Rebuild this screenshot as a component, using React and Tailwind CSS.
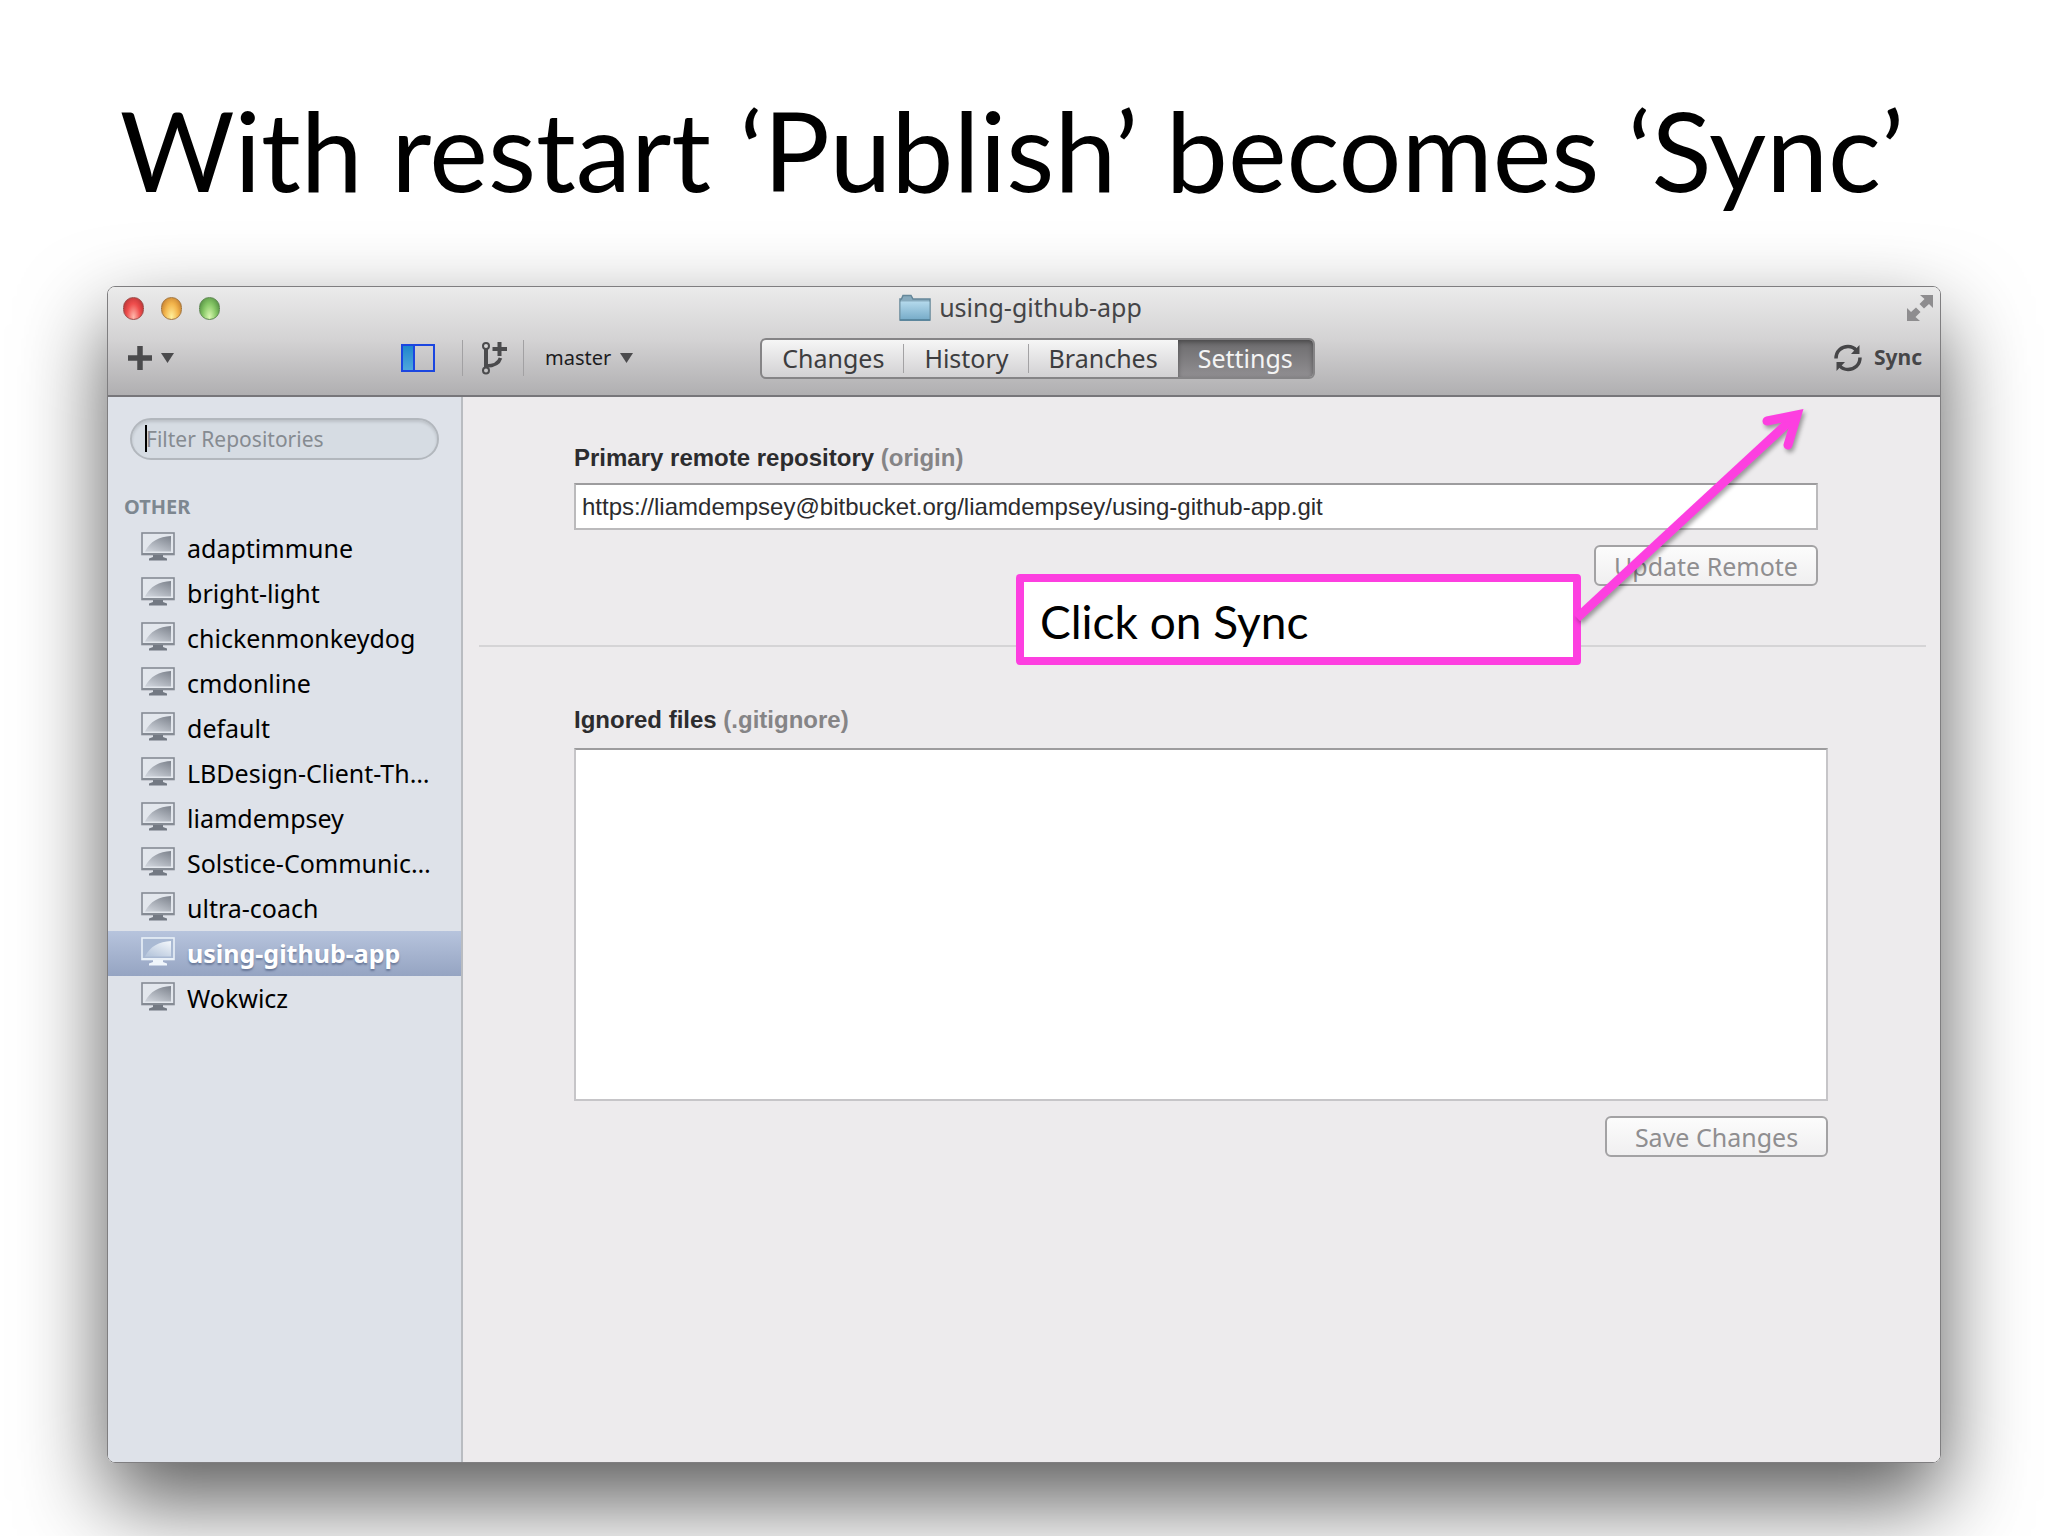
import { useState } from 'react'
import clsx from 'clsx'

const TABS = ['Changes', 'History', 'Branches', 'Settings']

const REPOS = [
  'adaptimmune',
  'bright-light',
  'chickenmonkeydog',
  'cmdonline',
  'default',
  'LBDesign-Client-Th…',
  'liamdempsey',
  'Solstice-Communic…',
  'ultra-coach',
  'using-github-app',
  'Wokwicz',
]

function Triangle() {
  return (
    <svg width="13" height="10" viewBox="0 0 13 10" fill="#4b4b4d" aria-hidden="true">
      <path d="M0 0h13L6.5 10z" />
    </svg>
  )
}

function MonitorIcon({ active }) {
  const id = active ? 'screen-on' : 'screen-off'
  const frame = active ? '#e9f0f8' : '#858b94'
  return (
    <svg width="34" height="29" viewBox="0 0 34 29" className="mb-1 shrink-0" aria-hidden="true">
      <defs>
        <linearGradient id={id} x1="1" y1="0" x2="0.3" y2="1">
          <stop offset="0" stopColor={active ? '#f4f8fc' : '#7c828c'} />
          <stop offset="1" stopColor={active ? '#b9c8dd' : '#c9ced6'} />
        </linearGradient>
      </defs>
      <rect x="1" y="1" width="32" height="21.5" fill={active ? '#a9b9d3' : '#e3e7ed'} stroke={frame} strokeWidth="1.6" />
      <path d="M4 19.500C9 9.500 18 4.500 30 4v15.500z" fill={`url(#${id})`} />
      <path d="M1 21h32v2H1z" fill={frame} />
      <path d="M12 23h10v2l4 1.500V28.500H8V26.500l4-1.500z" fill={active ? '#f0f6fc' : '#737983'} />
    </svg>
  )
}

function BranchIcon() {
  return (
    <svg width="27" height="34" viewBox="0 0 27 34" fill="none" stroke="#4b4b4d" aria-hidden="true">
      <path d="M5 8v19" strokeWidth="4" />
      <path d="M5 25c9 0 13-3 14.500-8" strokeWidth="3.600" />
      <path d="M18.500 1v14M11.500 8H26" strokeWidth="4" />
      <circle cx="5" cy="5" r="3" fill="#d5d4d5" strokeWidth="2" />
      <circle cx="5" cy="29.500" r="3" fill="#c4c3c4" strokeWidth="2" />
    </svg>
  )
}

function SyncIcon() {
  return (
    <svg width="28" height="28" viewBox="0 0 28 28" fill="none" stroke="#464648" strokeWidth="3.500" aria-hidden="true">
      <path d="M2 14.500C2 7 7.500 2.500 14 2.500c3.500 0 6.500 1.500 8.500 4" />
      <path d="M26 13.500C26 21 20.500 25.500 14 25.500c-3.500 0-6.500-1.500-8.500-4" />
      <path d="M25.500 1v9h-8.500z" fill="#464648" stroke="none" />
      <path d="M2.500 27v-9h8.500z" fill="#464648" stroke="none" />
    </svg>
  )
}

function FolderIcon() {
  return (
    <svg width="32" height="28" viewBox="0 0 32 28" aria-hidden="true">
      <defs>
        <linearGradient id="folder" x1="0" y1="0" x2="0" y2="1">
          <stop offset="0" stopColor="#b4d9ec" />
          <stop offset="1" stopColor="#77acc9" />
        </linearGradient>
      </defs>
      <path d="M1 26V5h1.500L4 1.500h8L14 5h17v21z" fill="#87aabd" stroke="#658799" strokeWidth="1.500" />
      <path d="M1.500 7.500h29v18h-29z" fill="url(#folder)" />
      <path d="M1 26h30" stroke="#4f7f99" strokeWidth="1.500" />
    </svg>
  )
}

function ExpandIcon() {
  return (
    <svg width="28" height="28" viewBox="0 0 28 28" fill="#8e8d8f" aria-hidden="true">
      <path d="M14 1h13v13l-4-4-5 4.500-4.500-4.500L18.500 5z" />
      <path d="M14 27H1V14l4 4 5-4.500L14.500 18 9.500 23z" />
    </svg>
  )
}

function TitleBar() {
  const light = 'h-[23px] w-[21px] rounded-full border'
  return (
    <div className="grid h-[42px] grid-cols-[1fr_auto_1fr] items-center pr-[6px] pl-[15px]">
      <div className="flex gap-[17px]">
        <button aria-label="Close" className={clsx(light, 'border-[#9c4a47] bg-radial-[at_50%_90%] from-[#ffb9ac] via-[#ef4d4c] to-[#a52a2d]')} />
        <button aria-label="Minimize" className={clsx(light, 'border-[#a3763e] bg-radial-[at_50%_90%] from-[#fff09c] via-[#f3b54c] to-[#b56c25]')} />
        <button aria-label="Zoom" className={clsx(light, 'border-[#5d8850] bg-radial-[at_50%_90%] from-[#d9f8b0] via-[#86c766] to-[#437c37]')} />
      </div>
      <div className="mr-4 flex items-center gap-2 text-[25px] text-[#454547]">
        <FolderIcon />
        using-github-app
      </div>
      <button aria-label="Full screen" className="justify-self-end">
        <ExpandIcon />
      </button>
    </div>
  )
}

function Toolbar({ tab, setTab }) {
  return (
    <div className="grid h-[58px] grid-cols-[1fr_auto_1fr] items-center pr-[18px] pl-[19px]">
      <div className="flex items-center">
        <div className="w-[274px]">
          <button aria-label="Add repository" className="flex items-center gap-2">
            <svg width="26" height="26" viewBox="0 0 26 26" aria-hidden="true">
              <path d="M13 1v24M1 13h24" stroke="#4b4b4d" strokeWidth="5.500" />
            </svg>
            <Triangle />
          </button>
        </div>
        <button aria-label="Toggle sidebar" className="flex h-7 w-[34px] border-2 border-[#1b46e0]">
          <span className="h-full w-[12px] border-r-2 border-[#1b46e0] bg-linear-to-b from-[#1c87cc] to-[#4da6dd]" />
        </button>
        <span className="mr-[18px] ml-[27px] h-9 w-px bg-[#a2a1a3]" />
        <button aria-label="New branch">
          <BranchIcon />
        </button>
        <span className="mr-[21px] ml-[15px] h-9 w-px bg-[#a2a1a3]" />
        <label className="flex items-center gap-2">
          <select aria-label="Branch" className="appearance-none text-xl text-[#1c1c1e]">
            <option>master</option>
          </select>
          <Triangle />
        </label>
      </div>

      <div className="ml-[26px] flex h-[41px] overflow-hidden rounded-md border-2 border-[#858486] bg-linear-to-b from-[#f6f6f6] to-[#d2d1d3] text-[25px] text-[#3d3d3f]">
        {TABS.map((name, i) => (
          <button
            key={name}
            onClick={() => setTab(name)}
            className={clsx(
              'relative px-5',
              tab === name && 'bg-linear-to-b from-[#6c6b6d] to-[#918f92] text-[#f4f4f4] shadow-[inset_0_2px_5px_rgba(0,0,0,0.35)]'
            )}
          >
            {name}
            {i < 2 && <span className="absolute top-1 right-0 h-[29px] w-px bg-[#a3a2a4]" />}
          </button>
        ))}
      </div>

      <button className="flex items-center gap-3 justify-self-end text-[21px] font-bold text-[#464648]">
        <SyncIcon />
        Sync
      </button>
    </div>
  )
}

function Sidebar({ repo, setRepo }) {
  return (
    <aside className="w-[355px] shrink-0 border-r-2 border-[#b9bcc1] bg-[#dee2e9] pt-[21px]">
      <div className="relative mx-[22px]">
        <input
          type="text"
          aria-label="Filter Repositories"
          placeholder="Filter Repositories"
          className="h-[42px] w-[309px] rounded-full border-2 border-[#b2b7bd] bg-[#d6dce3] px-[14px] text-[21px] text-black shadow-[inset_0_2px_3px_rgba(0,0,0,0.12)] outline-none placeholder:text-[#868b91]"
        />
        <span className="absolute top-[7px] left-[15px] h-[27px] w-[2px] bg-black" />
      </div>
      <h2 className="mt-[33px] pl-4 text-xl leading-[28px] font-bold text-[#7d8790]">OTHER</h2>
      <ul className="mt-[5px]">
        {REPOS.map((name) => (
          <li key={name}>
            <button
              onClick={() => setRepo(name)}
              className={clsx(
                'flex h-[45px] w-full items-center gap-3 pl-[33px] text-[25px] whitespace-nowrap',
                repo === name
                  ? 'bg-linear-to-b from-[#b7c4dd] to-[#95a4c2] font-bold text-white text-shadow-[0_2px_2px_rgba(70,85,120,0.6)]'
                  : 'text-black'
              )}
            >
              <MonitorIcon active={repo === name} />
              {name}
            </button>
          </li>
        ))}
      </ul>
    </aside>
  )
}

function PushButton({ className, children }) {
  return (
    <button className={clsx('h-[41px] rounded-md border-2 border-[#a3a2a4] bg-linear-to-b from-[#fcfcfc] to-[#f0eff0] text-[25px] leading-[36px] text-[#8f8e90]', className)}>
      {children}
    </button>
  )
}

function SettingsPane() {
  return (
    <section className="flex-1 bg-[#edebed] pr-[14px] pl-4 font-['Liberation_Sans',Arial,sans-serif]">
      <div className="flex flex-col pt-[47px] pr-[108px] pl-[95px]">
        <label htmlFor="remote" className="text-2xl leading-7 font-bold text-[#2c2c2e]">
          Primary remote repository <span className="text-[#858486]">(origin)</span>
        </label>
        <input
          id="remote"
          type="text"
          defaultValue="https://liamdempsey@bitbucket.org/liamdempsey/using-github-app.git"
          className="mt-[11px] h-[47px] w-full border-2 border-[#bbbabc] border-t-[#9d9c9e] bg-white px-[6px] text-2xl text-[#2c2c2e]"
        />
        <PushButton className="mt-[15px] w-[224px] self-end font-['Noto_Sans',sans-serif]">Update Remote</PushButton>
      </div>

      <hr className="mt-[59px] border-t-2 border-[#d5d4d6]" />

      <div className="flex flex-col pt-[59px] pr-[98px] pl-[95px]">
        <label htmlFor="ignored" className="text-2xl leading-7 font-bold text-[#2c2c2e]">
          Ignored files <span className="text-[#858486]">(.gitignore)</span>
        </label>
        <textarea id="ignored" className="mt-[14px] h-[353px] w-full resize-none border-2 border-[#c6c5c8] border-t-[#9d9c9e] bg-white" />
        <PushButton className="mt-[15px] w-[223px] self-end font-['Noto_Sans',sans-serif]">Save Changes</PushButton>
      </div>
    </section>
  )
}

// callout and arrow lie over the window and follow its right edge
function Callout() {
  return (
    <>
      <p className="absolute top-[288px] right-[360px] h-[91px] w-[565px] rounded-sm border-8 border-[#fd3fe0] bg-white pl-4 font-['Lato',sans-serif] text-[46px] leading-[80px] text-black">
        Click on Sync
      </p>
      <svg
        width="240"
        height="220"
        viewBox="0 0 240 220"
        fill="none"
        stroke="#fd3fe0"
        strokeWidth="9"
        className="pointer-events-none absolute top-[119px] right-[132px] drop-shadow-[2px_3px_2px_rgba(0,0,0,0.35)]"
        aria-hidden="true"
      >
        <path d="M8 213L222 15" />
        <path d="M198 16L228 10L219 40" strokeLinecap="round" strokeLinejoin="miter" />
      </svg>
    </>
  )
}

export default function App() {
  const [tab, setTab] = useState('Settings')
  const [repo, setRepo] = useState('using-github-app')

  return (
    <main className="flex min-h-screen flex-col overflow-hidden bg-white px-[107px] pb-[73px] font-['Noto_Sans',sans-serif]">
      <h1 className="pt-[79px] pr-6 pb-[67px] text-center font-['Lato',sans-serif] text-[111px] leading-[140px] whitespace-nowrap text-black">
        With restart ‘Publish’ becomes ‘Sync’
      </h1>

      <div className="relative flex flex-1 flex-col">
        <div className="flex flex-1 flex-col overflow-hidden rounded-lg border border-[#7f7e80] shadow-[0_38px_86px_rgba(0,0,0,0.65)]">
          <header className="h-[110px] border-b-2 border-[#77767a] bg-linear-to-b from-[#ebebeb] via-[#d3d2d3] to-[#b0afb1]">
            <TitleBar />
            <Toolbar tab={tab} setTab={setTab} />
          </header>
          <div className="flex flex-1">
            <Sidebar repo={repo} setRepo={setRepo} />
            <SettingsPane />
          </div>
        </div>
        <Callout />
      </div>
    </main>
  )
}
